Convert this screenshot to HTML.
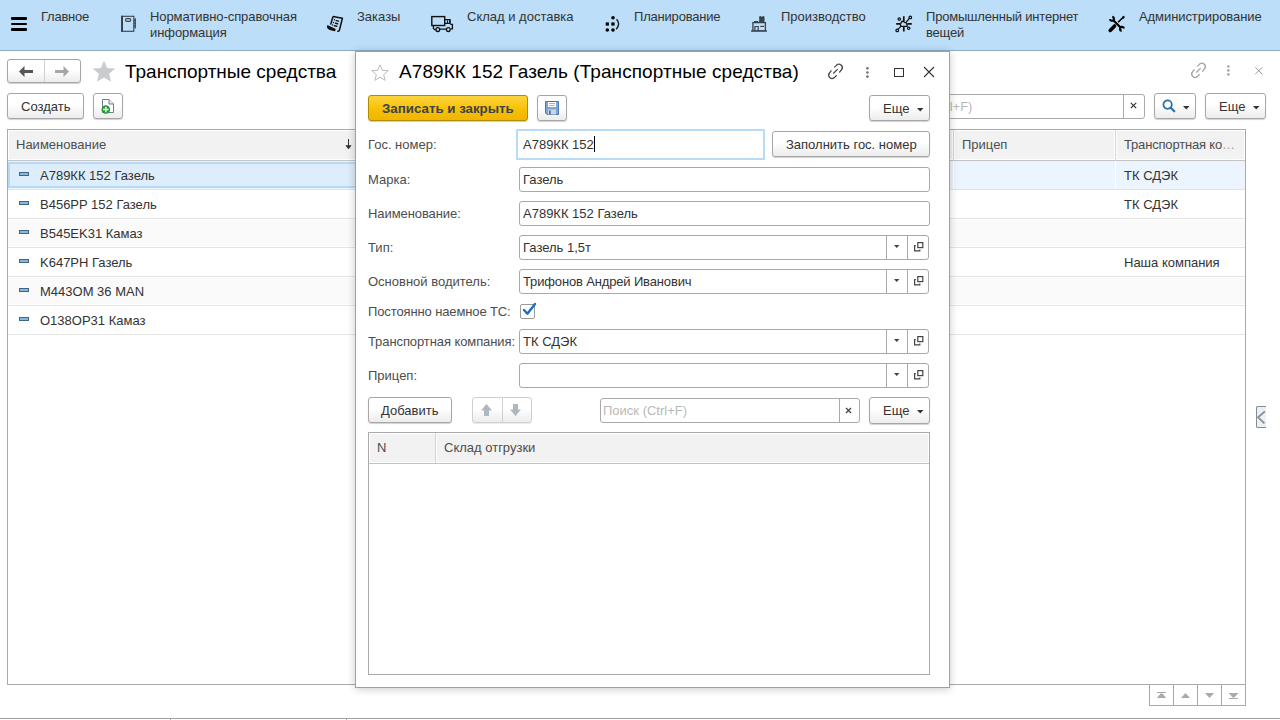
<!DOCTYPE html>
<html><head><meta charset="utf-8">
<style>
*{box-sizing:border-box;margin:0;padding:0}
html,body{width:1280px;height:720px;overflow:hidden;background:#fff;font-family:"Liberation Sans",sans-serif;font-size:13px;color:#333}
.a{position:absolute}
svg.a{overflow:visible}
.t{position:absolute;white-space:nowrap;line-height:15px}
.lbl{color:#4d4d4d}
#bar{left:0;top:0;width:1280px;height:51px;background:#bcdef8;border-bottom:1px solid #90abc2}
.nav{color:#333;line-height:16px}
.btn{position:absolute;border:1px solid #a6a6a6;border-radius:3px;background:linear-gradient(#fff 0%,#fff 45%,#ececec 100%);box-shadow:0 1px 1px rgba(0,0,0,.18)}
.inp{position:absolute;border:1px solid #a9a9a9;border-radius:3px;background:#fff}
.row{position:absolute;left:8px;width:1237px;height:29px;border-bottom:1px solid #e3e3e3}
.ico{position:absolute;left:19px;width:10px;height:4px;border:1px solid #3f6587;background:#88b8e0}
.dd{position:absolute;width:1px;height:23px;background:#a9a9a9}
</style></head><body>
<!-- top bar -->
<div id="bar" class="a">
  <div class="a" style="left:11px;top:17px;width:16px;height:2.5px;background:#000;border-radius:1px"></div>
  <div class="a" style="left:11px;top:22.6px;width:16px;height:2.6px;background:#000;border-radius:1px"></div>
  <div class="a" style="left:11px;top:28px;width:16px;height:2.5px;background:#000;border-radius:1px"></div>
  <div class="t nav" style="left:41px;top:9px;letter-spacing:-0.25px">Главное</div>
  <svg class="a" style="left:115px;top:10px" width="28" height="28" viewBox="0 0 28 28">
    <rect x="6.7" y="6.3" width="12.1" height="15" fill="none" stroke="#38424c" stroke-width="1.1"/>
    <rect x="6.2" y="5.8" width="1.8" height="16" fill="#38424c"/>
    <rect x="10.6" y="8.6" width="5.1" height="2.8" rx="1.2" fill="none" stroke="#38424c" stroke-width="1.1"/>
    <path d="M20.2 8.2V18.5" stroke="#38424c" stroke-width="1.3"/>
    <path d="M18.8 10.4H20.8M18.8 13.2H20.8M18.8 16H20.8" stroke="#38424c" stroke-width="1"/>
  </svg>
  <div class="t nav" style="left:150px;top:9px;letter-spacing:-0.08px">Нормативно-справочная<br>информация</div>
  <svg class="a" style="left:320px;top:10px" width="28" height="28" viewBox="0 0 28 28">
    <path d="M13 6.4 L22.4 8.3 L19.4 20.2 Q18.9 21.6 17.2 21.2" fill="none" stroke="#111" stroke-width="1.5" stroke-linejoin="round"/>
    <path d="M13 6.4 L10.6 14.6" fill="none" stroke="#111" stroke-width="1.5"/>
    <path d="M7.6 16 Q7.4 18.4 10 19.3 L14.6 20.6 Q15.4 19.9 14.6 19 L8.2 16.1 Z" fill="#111" stroke="#111" stroke-width="1.3" stroke-linejoin="round"/>
    <circle cx="14.4" cy="9.8" r="0.7" fill="#111"/><circle cx="13.4" cy="12.5" r="0.7" fill="#111"/><circle cx="12.6" cy="15" r="0.7" fill="#111"/>
    <path d="M16.2 10.6L18.5 11.1M15.5 13.3L17.6 13.8M14.5 15.8L16.7 16.3" stroke="#111" stroke-width="1.4" stroke-linecap="round"/>
  </svg>
  <div class="t nav" style="left:357px;top:9px">Заказы</div>
  <svg class="a" style="left:425px;top:10px" width="35" height="28" viewBox="0 0 35 28">
    <rect x="6.8" y="6.6" width="12.9" height="8.9" fill="none" stroke="#111" stroke-width="1.4"/>
    <path d="M19.8 9.6H25.1V13.4H19.8" fill="none" stroke="#111" stroke-width="1.3"/>
    <path d="M22.4 10.2V13M24.5 10.2V13" stroke="#111" stroke-width="1"/>
    <path d="M25.3 14.4H27.4V18.8H26" fill="none" stroke="#111" stroke-width="1.3"/>
    <path d="M8.4 15.8V18.4L10.6 20.2M14.6 19.2H21.4" fill="none" stroke="#111" stroke-width="1.3"/>
    <circle cx="12.8" cy="19.6" r="1.9" fill="none" stroke="#111" stroke-width="1.3"/>
    <circle cx="23.3" cy="19.6" r="1.9" fill="none" stroke="#111" stroke-width="1.3"/>
  </svg>
  <div class="t nav" style="left:467px;top:9px">Склад и доставка</div>
  <svg class="a" style="left:598px;top:10px" width="28" height="28" viewBox="0 0 28 28">
    <circle cx="15" cy="7.8" r="1.8" fill="#000"/>
    <rect x="7.7" y="12.4" width="3.2" height="3.2" fill="#000"/>
    <rect x="13.3" y="12.4" width="3.3" height="3.2" fill="#000"/>
    <circle cx="9.3" cy="20" r="1.8" fill="#000"/>
    <circle cx="15" cy="20" r="1.8" fill="#000"/>
    <path d="M18.6 9.3 Q22.8 14 18.3 19.2" fill="none" stroke="#111" stroke-width="1.3"/>
  </svg>
  <div class="t nav" style="left:634px;top:9px;letter-spacing:-0.2px">Планирование</div>
  <svg class="a" style="left:745px;top:10px" width="28" height="28" viewBox="0 0 28 28">
    <rect x="14.2" y="6.8" width="5.3" height="5.4" fill="#38424c"/>
    <circle cx="15.3" cy="7" r="0.95" fill="#38424c"/><circle cx="18.3" cy="7" r="0.95" fill="#38424c"/>
    <rect x="9" y="11" width="4.3" height="1.2" fill="#38424c"/>
    <path d="M7.9 20.5V12.7H20.4V20.5" fill="none" stroke="#38424c" stroke-width="1.3"/>
    <path d="M9.9 20.5V16.5H13.2V20.5" fill="none" stroke="#38424c" stroke-width="1.2"/>
    <path d="M15.2 16.4H19" stroke="#38424c" stroke-width="1.1"/>
    <rect x="6.2" y="20.1" width="15.6" height="1.7" fill="#38424c"/>
  </svg>
  <div class="t nav" style="left:781px;top:9px">Производство</div>
  <svg class="a" style="left:890px;top:10px" width="28" height="28" viewBox="0 0 28 28">
    <path d="M11.7 11.5 L13.4 11.3 L14.8 12.5 L16.3 12.8 L17.1 15 L17.1 16.3 L10.9 16.3 L10.3 14.4 Z" fill="none" stroke="#111" stroke-width="1.3"/>
    <path d="M13.8 6.2V11.3M13.8 16.7V21.4M6.2 13.9H10.3M17.3 13.9H21.8" stroke="#111" stroke-width="1.7"/>
    <path d="M16.3 12L19.4 8.4M10.9 16.3L7.9 19.4" stroke="#111" stroke-width="1.2"/>
    <circle cx="20.3" cy="7.4" r="1.3" fill="none" stroke="#111" stroke-width="1.2"/>
    <circle cx="7.2" cy="20.4" r="1.3" fill="none" stroke="#111" stroke-width="1.2"/>
    <circle cx="9.3" cy="9.1" r="1.2" fill="none" stroke="#111" stroke-width="1.2"/>
    <circle cx="18.7" cy="18.3" r="1.2" fill="none" stroke="#111" stroke-width="1.2"/>
  </svg>
  <div class="t nav" style="left:926px;top:9px;letter-spacing:-0.2px">Промышленный интернет<br>вещей</div>
  <svg class="a" style="left:1102px;top:10px" width="28" height="28" viewBox="0 0 28 28">
    <path d="M10.25 6.83 A2.0 2.0 0 1 1 7.93 9.15" fill="none" stroke="#000" stroke-width="2.1"/>
    <path d="M19.65 20.87 A2.0 2.0 0 1 1 21.97 18.55" fill="none" stroke="#000" stroke-width="2.1"/>
    <path d="M11.3 10.2 L18.6 17.5" stroke="#000" stroke-width="2.1"/>
    <path d="M8.2 20.4 L12.6 16" stroke="#000" stroke-width="3.6" stroke-linecap="round"/>
    <path d="M16.6 11.8 L20.5 8" stroke="#000" stroke-width="1.6" stroke-linecap="round"/>
    <ellipse cx="21.3" cy="7.3" rx="1.5" ry="1.2" transform="rotate(-45 21.3 7.3)" fill="#000"/>
  </svg>
  <div class="t nav" style="left:1139px;top:9px;letter-spacing:-0.08px">Администрирование</div>
</div>

<!-- list form -->
<div class="btn" style="left:7px;top:59px;width:74px;height:24px"></div>
<div class="a" style="left:44px;top:60px;width:1px;height:22px;background:#d0d0d0"></div>
<svg class="a" style="left:19px;top:66px" width="15" height="12" viewBox="0 0 15 12">
  <path d="M0 5.5 L5.5 0 L5.5 4 L14 4 L14 7 L5.5 7 L5.5 11 Z" fill="#555"/>
</svg>
<svg class="a" style="left:55px;top:66px" width="15" height="12" viewBox="0 0 15 12">
  <path d="M14 5.5 L8.5 0 L8.5 4 L0 4 L0 7 L8.5 7 L8.5 11 Z" fill="#a6a6a6"/>
</svg>
<svg class="a" style="left:91.5px;top:60px" width="24" height="22.5" viewBox="0 0 23 22">
  <path d="M11.5 0.5 L14.6 7.7 L22.5 8.2 L16.5 13.4 L18.4 21.3 L11.5 17.2 L4.6 21.3 L6.5 13.4 L0.5 8.2 L8.4 7.7 Z" fill="#c9cbce"/>
</svg>
<div class="t" style="left:125px;top:61px;font-size:19px;line-height:22px;color:#000">Транспортные средства</div>
<div class="btn" style="left:7px;top:93px;width:77px;height:26px"></div>
<div class="t" style="left:21px;top:99px">Создать</div>
<div class="btn" style="left:93px;top:93px;width:30px;height:26px"></div>
<svg class="a" style="left:101px;top:99px" width="15" height="15" viewBox="0 0 15 15">
  <path d="M1.5 0.5 H8 L12.5 5 V13.5 H1.5 Z" fill="#fff" stroke="#6c7f95" stroke-width="1"/>
  <path d="M8 0.5 V5 H12.5" fill="#e8eef5" stroke="#6c7f95" stroke-width="1"/>
  <circle cx="4.8" cy="10.5" r="4.3" fill="#1f9a32"/>
  <path d="M4.8 7.8v5.4M2.1 10.5h5.4" stroke="#fff" stroke-width="1.4"/>
</svg>
<!-- list search (right part) -->
<div class="inp" style="left:900px;top:94px;width:245px;height:25px;border-radius:3px"></div>
<div class="t" style="left:928px;top:99px;color:#b9b9b9">(Ctrl+F)</div>
<div class="a" style="left:1123px;top:95px;width:1px;height:23px;background:#a9a9a9"></div>
<svg class="a" style="left:1130px;top:102px" width="7" height="7" viewBox="0 0 7 7"><path d="M0.8 0.8L6.2 6.2M6.2 0.8L0.8 6.2" stroke="#333" stroke-width="1.2"/></svg>
<div class="btn" style="left:1154px;top:93px;width:42px;height:26px"></div>
<svg class="a" style="left:1162px;top:99px" width="14" height="14" viewBox="0 0 14 14">
  <circle cx="5.6" cy="5.6" r="4.2" fill="none" stroke="#2673ac" stroke-width="1.8"/>
  <path d="M8.7 8.7 L12.3 12.3" stroke="#2673ac" stroke-width="2.2" stroke-linecap="round"/>
</svg>
<svg class="a" style="left:1183px;top:106px" width="7" height="4" viewBox="0 0 7 4"><path d="M0 0H6.5L3.25 3.5Z" fill="#333"/></svg>
<div class="btn" style="left:1205px;top:93px;width:61px;height:26px"></div>
<div class="t" style="left:1219px;top:99px">Еще</div>
<svg class="a" style="left:1253px;top:106px" width="7" height="4" viewBox="0 0 7 4"><path d="M0 0H6.5L3.25 3.5Z" fill="#333"/></svg>
<!-- list title icons -->
<svg class="a" style="left:1188px;top:60px" width="22" height="21" viewBox="0 0 22 21"><path d="M9.33 6.41 L11.6 4.1 A3.4 3.4 0 0 1 16.4 8.9 L14.29 11.5 M6.41 9.33 L4.6 11.8 A3.4 3.4 0 0 0 9.4 16.6 L11.66 14.29 M8.31 12.54 L12.68 8.16" fill="none" stroke="#a3a3a3" stroke-width="1.3"/></svg>
<svg class="a" style="left:1226px;top:65px" width="5" height="11" viewBox="0 0 5 11">
  <circle cx="2.4" cy="1.5" r="1.3" fill="#a9a9a9"/><circle cx="2.4" cy="5.4" r="1.3" fill="#a9a9a9"/><circle cx="2.4" cy="9.4" r="1.3" fill="#a9a9a9"/>
</svg>
<svg class="a" style="left:1255px;top:67px" width="8" height="8" viewBox="0 0 8 8"><path d="M0.3 0.3L7.2 7.2M7.2 0.3L0.3 7.2" stroke="#9a9a9a" stroke-width="1"/></svg>

<!-- list table -->
<div class="a" style="left:7px;top:129px;width:1239px;height:556px;border:1px solid #a9a9a9"></div>
<div class="a" style="left:8px;top:130px;width:1237px;height:30px;background:#fff"></div>
<div class="a" style="left:9px;top:131px;width:943px;height:28px;background:#f2f2f2"></div>
<div class="a" style="left:955px;top:131px;width:159px;height:28px;background:#f2f2f2"></div>
<div class="a" style="left:1117px;top:131px;width:127px;height:28px;background:#f2f2f2"></div>
<div class="a" style="left:953px;top:130px;width:1px;height:30px;background:#d4d4d4"></div>
<div class="a" style="left:1115px;top:130px;width:1px;height:30px;background:#d4d4d4"></div>
<div class="a" style="left:8px;top:160px;width:1237px;height:1px;background:#c4c4c4"></div>
<div class="t lbl" style="left:16px;top:137px">Наименование</div>
<svg class="a" style="left:345px;top:139px" width="7" height="11" viewBox="0 0 7 11"><path d="M3.5 0V8" stroke="#333" stroke-width="1"/><path d="M0.9 6.6L6.1 6.6L3.5 10Z" fill="#333" stroke="#333" stroke-width="0.6" stroke-linejoin="round"/></svg>
<div class="t lbl" style="left:962px;top:137px">Прицеп</div>
<div class="t lbl" style="left:1124px;top:137px;letter-spacing:-0.17px">Транспортная ко<span style="color:#a0a0a0">…</span></div>

<div class="a" style="left:8px;top:161px;width:1237px;height:28px;background:#ecf5fd"></div>
<div class="a" style="left:953px;top:161px;width:1px;height:28px;background:#fff"></div>
<div class="a" style="left:1115px;top:161px;width:1px;height:28px;background:#fff"></div>
<div class="a" style="left:8px;top:162px;width:400px;height:26px;background:#ddedfb;border:2px solid #b5d9f7;border-right:none"></div>
<div class="a" style="left:8px;top:189px;width:1237px;height:1px;background:#e3e3e3"></div>
<div class="row" style="top:190px;height:29px"></div>
<div class="row" style="top:219px;background:#fafafa;box-shadow:inset 0 1px #fff,inset 0 -1px #fff"></div>
<div class="row" style="top:248px"></div>
<div class="row" style="top:277px;background:#fafafa;box-shadow:inset 0 1px #fff,inset 0 -1px #fff"></div>
<div class="row" style="top:306px"></div>
<div class="ico" style="top:172px"></div>
<div class="ico" style="top:201px"></div>
<div class="ico" style="top:230px"></div>
<div class="ico" style="top:259px"></div>
<div class="ico" style="top:288px"></div>
<div class="ico" style="top:317px"></div>
<div class="t" style="left:40px;top:168px">A789КК 152 Газель</div>
<div class="t" style="left:40px;top:197px">B456PP 152 Газель</div>
<div class="t" style="left:40px;top:226px">B545EK31 Камаз</div>
<div class="t" style="left:40px;top:255px">K647PH Газель</div>
<div class="t" style="left:40px;top:284px">M443OM 36 MAN</div>
<div class="t" style="left:40px;top:313px">O138OP31 Камаз</div>
<div class="t" style="left:1124px;top:168px">ТК СДЭК</div>
<div class="t" style="left:1124px;top:197px">ТК СДЭК</div>
<div class="t" style="left:1124px;top:255px">Наша компания</div>

<!-- bottom nav buttons -->
<div class="a" style="left:1149px;top:684px;width:97px;height:22px;border:1px solid #a9a9a9;background:#fff"></div>
<div class="a" style="left:1173px;top:685px;width:1px;height:20px;background:#a9a9a9"></div>
<div class="a" style="left:1197px;top:685px;width:1px;height:20px;background:#a9a9a9"></div>
<div class="a" style="left:1221px;top:685px;width:1px;height:20px;background:#a9a9a9"></div>
<svg class="a" style="left:1157px;top:692px" width="9" height="7" viewBox="0 0 9 7"><rect x="0" y="0" width="9" height="1" fill="#aaa"/><path d="M0 6V5.8L3.6 1.5H5.4L9 5.8V6Z" fill="#aaa"/></svg>
<svg class="a" style="left:1181px;top:693px" width="9" height="5" viewBox="0 0 9 5"><path d="M0 5L4.5 0L9 5Z" fill="#aaa"/></svg>
<svg class="a" style="left:1205px;top:693px" width="9" height="5" viewBox="0 0 9 5"><path d="M0 0L4.5 5L9 0Z" fill="#aaa"/></svg>
<svg class="a" style="left:1229px;top:693px" width="9" height="6" viewBox="0 0 9 6"><path d="M0 0V0.2L3.6 4.5H5.4L9 0.2V0Z" fill="#aaa"/><rect x="0" y="5" width="9" height="1" fill="#aaa"/></svg>
<!-- side tab -->
<div class="a" style="left:1256px;top:406px;width:10px;height:22px;background:#e8f0fa;border:1px solid #8a8a8a;border-right:none;border-radius:2px 0 0 2px"></div>
<svg class="a" style="left:1256px;top:410px" width="10" height="15" viewBox="0 0 10 15"><path d="M8.9 1.4L2.1 7.3L8.4 13.3" fill="none" stroke="#8a8a8a" stroke-width="1.7"/></svg>

<!-- bottom panel line -->
<div class="a" style="left:0;top:718px;width:1280px;height:1px;background:#a0a0a0"></div>
<div class="a" style="left:170px;top:719px;width:1px;height:1px;background:#a9a9a9"></div>
<div class="a" style="left:346px;top:719px;width:1px;height:1px;background:#a9a9a9"></div>

<!-- dialog -->
<div class="a" style="left:355px;top:51px;width:595px;height:637px;background:#fff;border:1px solid #a0a0a0;box-shadow:0 1px 8px rgba(0,0,0,.22)"></div>
<svg class="a" style="left:371px;top:64px" width="18" height="17" viewBox="0 0 18 17">
  <path d="M9 0.8 L11.3 6.3 L17.2 6.7 L12.7 10.6 L14.1 16.3 L9 13.2 L3.9 16.3 L5.3 10.6 L0.8 6.7 L6.7 6.3 Z" fill="none" stroke="#b8bcc2" stroke-width="1"/>
</svg>
<div class="t" style="left:399px;top:61px;font-size:19px;line-height:22px;color:#000;letter-spacing:0.07px">A789КК 152 Газель (Транспортные средства)</div>
<svg class="a" style="left:825px;top:61px" width="22" height="21" viewBox="0 0 22 21"><path d="M9.33 6.41 L11.6 4.1 A3.4 3.4 0 0 1 16.4 8.9 L14.29 11.5 M6.41 9.33 L4.6 11.8 A3.4 3.4 0 0 0 9.4 16.6 L11.66 14.29 M8.31 12.54 L12.68 8.16" fill="none" stroke="#4a4a4a" stroke-width="1.3"/></svg>
<svg class="a" style="left:865px;top:66px" width="5" height="12" viewBox="0 0 5 12">
  <circle cx="2.4" cy="2.3" r="1.35" fill="#777"/><circle cx="2.4" cy="6.5" r="1.35" fill="#777"/><circle cx="2.4" cy="10.6" r="1.35" fill="#777"/>
</svg>
<div class="a" style="left:894px;top:68px;width:9.5px;height:9px;border:1.5px solid #333"></div>
<svg class="a" style="left:923px;top:66px" width="12" height="12" viewBox="0 0 12 12"><path d="M1 1L11 11M11 1L1 11" stroke="#333" stroke-width="1.1"/></svg>

<div class="a" style="left:368px;top:95px;width:160px;height:26px;border:1px solid #b08d00;border-radius:3px;background:linear-gradient(#fdd33f,#f6c103 55%,#f0b500);box-shadow:0 1px 1px rgba(0,0,0,.2)"></div>
<div class="t" style="left:382px;top:101px;font-weight:bold;font-size:13.3px;color:#3c4250">Записать и закрыть</div>
<div class="btn" style="left:537px;top:95px;width:30px;height:26px"></div>
<svg class="a" style="left:545px;top:101px" width="14" height="14" viewBox="0 0 14 14">
  <path d="M0.5 0.5H13.5V13.5H2L0.5 12Z" fill="#7da6d8" stroke="#4b78b0" stroke-width="1"/>
  <rect x="3" y="1" width="8" height="5" fill="#fff"/>
  <path d="M4 2.5h6M4 4.5h6" stroke="#7da6d8" stroke-width="0.8"/>
  <rect x="3" y="8.5" width="8" height="5" fill="#cfd6d4"/>
  <rect x="4" y="9.5" width="1.7" height="4" fill="#3d6fb0"/>
</svg>
<div class="btn" style="left:869px;top:95px;width:61px;height:26px"></div>
<div class="t" style="left:883px;top:101px">Еще</div>
<svg class="a" style="left:917px;top:108px" width="7" height="4" viewBox="0 0 7 4"><path d="M0 0H6.5L3.25 3.5Z" fill="#333"/></svg>

<div class="t lbl" style="left:368px;top:137px">Гос. номер:</div>
<div class="a" style="left:516px;top:129px;width:249px;height:31px;border:2px solid #b8dbf8;border-radius:0;background:#fff"></div>
<div class="t" style="left:523px;top:137px">A789КК 152</div>
<div class="a" style="left:594px;top:136px;width:1px;height:16px;background:#000"></div>
<div class="btn" style="left:772px;top:131px;width:158px;height:26px"></div>
<div class="t" style="left:786px;top:137px">Заполнить гос. номер</div>

<div class="t lbl" style="left:368px;top:172px">Марка:</div>
<div class="inp" style="left:519px;top:167px;width:411px;height:25px"></div>
<div class="t" style="left:523px;top:172px">Газель</div>
<div class="t lbl" style="left:368px;top:206px;letter-spacing:-0.08px">Наименование:</div>
<div class="inp" style="left:519px;top:201px;width:411px;height:25px"></div>
<div class="t" style="left:523px;top:206px">A789КК 152 Газель</div>

<div class="t lbl" style="left:368px;top:240px">Тип:</div>
<div class="inp" style="left:519px;top:235px;width:410px;height:25px"></div>
<div class="t" style="left:523px;top:240px">Газель 1,5т</div>
<div class="t lbl" style="left:368px;top:274px">Основной водитель:</div>
<div class="inp" style="left:519px;top:269px;width:410px;height:25px"></div>
<div class="t" style="left:523px;top:274px;letter-spacing:-0.15px">Трифонов Андрей Иванович</div>
<div class="t lbl" style="left:368px;top:304px;letter-spacing:-0.12px">Постоянно наемное ТС:</div>
<div class="a" style="left:520px;top:304px;width:15px;height:15px;border:1px solid #9a9a9a;border-radius:2px;background:#fff"></div>
<svg class="a" style="left:520px;top:302px" width="17" height="15" viewBox="0 0 17 15">
  <path d="M4 8 L7.4 11.7 L15 2" fill="none" stroke="#1f6fc0" stroke-width="2.4" stroke-linecap="round" stroke-linejoin="round"/>
</svg>
<div class="t lbl" style="left:368px;top:334px;letter-spacing:-0.09px">Транспортная компания:</div>
<div class="inp" style="left:519px;top:329px;width:410px;height:25px"></div>
<div class="t" style="left:523px;top:334px">ТК СДЭК</div>
<div class="t lbl" style="left:368px;top:368px">Прицеп:</div>
<div class="inp" style="left:519px;top:363px;width:410px;height:25px"></div>

<!-- dropdown parts -->
<div class="dd" style="left:886px;top:236px"></div><div class="dd" style="left:907px;top:236px"></div>
<div class="dd" style="left:886px;top:270px"></div><div class="dd" style="left:907px;top:270px"></div>
<div class="dd" style="left:886px;top:330px"></div><div class="dd" style="left:907px;top:330px"></div>
<div class="dd" style="left:886px;top:364px"></div><div class="dd" style="left:907px;top:364px"></div>
<svg class="a" style="left:894px;top:245px" width="6" height="4" viewBox="0 0 6 4"><path d="M0 0H5.5L2.75 3Z" fill="#444"/></svg>
<svg class="a" style="left:894px;top:279px" width="6" height="4" viewBox="0 0 6 4"><path d="M0 0H5.5L2.75 3Z" fill="#444"/></svg>
<svg class="a" style="left:894px;top:339px" width="6" height="4" viewBox="0 0 6 4"><path d="M0 0H5.5L2.75 3Z" fill="#444"/></svg>
<svg class="a" style="left:894px;top:373px" width="6" height="4" viewBox="0 0 6 4"><path d="M0 0H5.5L2.75 3Z" fill="#444"/></svg>
<svg class="a" style="left:914px;top:242px" width="10" height="10" viewBox="0 0 10 10"><rect x="3.8" y="0.6" width="5" height="5" fill="none" stroke="#444" stroke-width="1.2"/><path d="M1.8 3.6H0.6V8.8H5.8V7.6" fill="none" stroke="#444" stroke-width="1.2"/></svg>
<svg class="a" style="left:914px;top:276px" width="10" height="10" viewBox="0 0 10 10"><rect x="3.8" y="0.6" width="5" height="5" fill="none" stroke="#444" stroke-width="1.2"/><path d="M1.8 3.6H0.6V8.8H5.8V7.6" fill="none" stroke="#444" stroke-width="1.2"/></svg>
<svg class="a" style="left:914px;top:336px" width="10" height="10" viewBox="0 0 10 10"><rect x="3.8" y="0.6" width="5" height="5" fill="none" stroke="#444" stroke-width="1.2"/><path d="M1.8 3.6H0.6V8.8H5.8V7.6" fill="none" stroke="#444" stroke-width="1.2"/></svg>
<svg class="a" style="left:914px;top:370px" width="10" height="10" viewBox="0 0 10 10"><rect x="3.8" y="0.6" width="5" height="5" fill="none" stroke="#444" stroke-width="1.2"/><path d="M1.8 3.6H0.6V8.8H5.8V7.6" fill="none" stroke="#444" stroke-width="1.2"/></svg>

<!-- tabular section toolbar -->
<div class="btn" style="left:368px;top:397px;width:84px;height:26px"></div>
<div class="t" style="left:381px;top:403px">Добавить</div>
<div class="btn" style="left:472px;top:397px;width:60px;height:26px;border-color:#cfcfcf;box-shadow:0 1px 1px rgba(0,0,0,.08)"></div>
<div class="a" style="left:502px;top:398px;width:1px;height:24px;background:#d0d0d0"></div>
<svg class="a" style="left:481px;top:404px" width="11" height="12" viewBox="0 0 11 12"><path d="M5.5 0L11 6.5H8V12H3V6.5H0Z" fill="#aeb8c1"/></svg>
<svg class="a" style="left:510px;top:404px" width="11" height="12" viewBox="0 0 11 12"><path d="M5.5 12L11 5.5H8V0H3V5.5H0Z" fill="#aeb8c1"/></svg>
<div class="inp" style="left:600px;top:398px;width:260px;height:25px"></div>
<div class="a" style="left:839px;top:399px;width:1px;height:23px;background:#a9a9a9"></div>
<svg class="a" style="left:845px;top:407px" width="7" height="7" viewBox="0 0 7 7"><path d="M1 1L6 6M6 1L1 6" stroke="#444" stroke-width="1.25"/></svg>
<div class="t" style="left:603px;top:403px;color:#b9b9b9">Поиск (Ctrl+F)</div>
<div class="btn" style="left:869px;top:397px;width:61px;height:27px"></div>
<div class="t" style="left:883px;top:403px">Еще</div>
<svg class="a" style="left:917px;top:410px" width="7" height="4" viewBox="0 0 7 4"><path d="M0 0H6.5L3.25 3.5Z" fill="#333"/></svg>

<div class="a" style="left:368px;top:432px;width:562px;height:243px;border:1px solid #a9a9a9"></div>
<div class="a" style="left:370px;top:434px;width:65px;height:28px;background:#f2f2f2"></div>
<div class="a" style="left:437px;top:434px;width:491px;height:28px;background:#f2f2f2"></div>
<div class="a" style="left:435px;top:433px;width:1px;height:30px;background:#d4d4d4"></div>
<div class="a" style="left:369px;top:463px;width:560px;height:1px;background:#c4c4c4"></div>
<div class="t lbl" style="left:377px;top:440px">N</div>
<div class="t lbl" style="left:444px;top:440px">Склад отгрузки</div>
</body></html>
